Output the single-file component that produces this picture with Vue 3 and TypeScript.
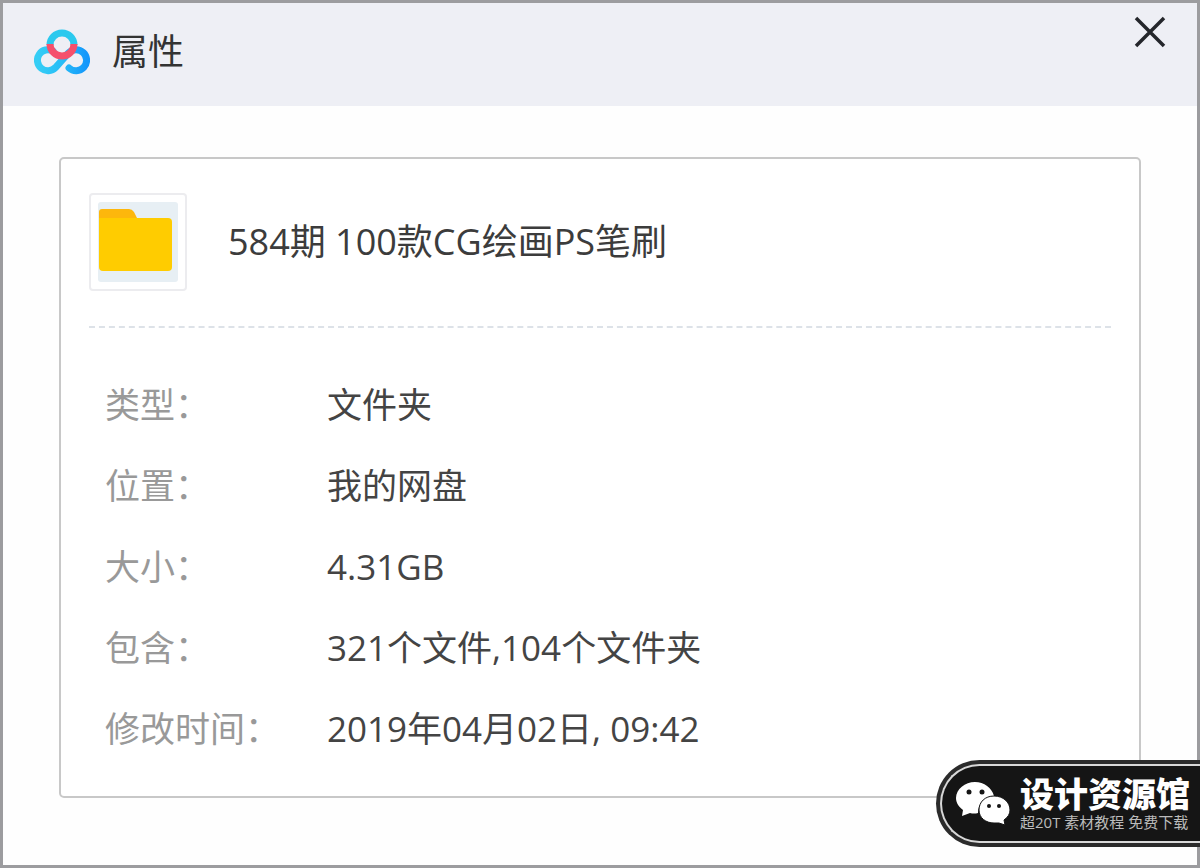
<script setup lang="ts">
interface Property {
  label: string
  value: string
}

const properties: Property[] = [
  { label: '类型：', value: '文件夹' },
  { label: '位置：', value: '我的网盘' },
  { label: '大小：', value: '4.31GB' },
  { label: '包含：', value: '321个文件,104个文件夹' },
  { label: '修改时间：', value: '2019年04月02日, 09:42' },
]
</script>

<template>
  <main class="window">
    <header class="titlebar">
      <svg class="logo" viewBox="0 0 56 48" aria-hidden="true">
        <defs>
          <linearGradient id="loopBlue" x1="0" y1="0" x2="1" y2="0">
            <stop offset="0" stop-color="#35cdf5" />
            <stop offset="0.5" stop-color="#27bdf7" />
            <stop offset="1" stop-color="#1497fb" />
          </linearGradient>
        </defs>
        <g fill="none" stroke-width="7" stroke-linecap="round">
          <path
            d="M19 23 A10.500 10.500 0 1 0 21.500 39.500 L34.500 25 A10.500 10.500 0 1 1 35 40"
            stroke="url(#loopBlue)"
          />
          <path d="M16 17 A12 12 0 0 1 40 17" stroke="#2bc9ee" stroke-linecap="butt" />
          <path d="M16 16 A12 12 0 0 0 40 16" stroke="#f5506c" stroke-linecap="butt" />
        </g>
      </svg>
      <h1 class="title">属性</h1>
      <button class="close" type="button" aria-label="关闭">
        <svg viewBox="0 0 32 32" aria-hidden="true">
          <path d="M2 2 L30 30 M30 2 L2 30" fill="none" stroke="#24262b" stroke-width="3.500" />
        </svg>
      </button>
    </header>

    <section class="card">
      <div class="summary">
        <div class="thumb">
          <svg viewBox="0 0 80 80" aria-hidden="true">
            <rect width="80" height="80" rx="3" fill="#e7eff4" />
            <path d="M1 20 V10 Q1 7 4 7 H31 Q34 7 36 10 L41 20 Z" fill="#fdb70c" />
            <path d="M1 16 H70 Q74 16 74 20 V65 Q74 69 70 69 H5 Q1 69 1 65 Z" fill="#fc0" />
          </svg>
        </div>
        <h2 class="name">584期 100款CG绘画PS笔刷</h2>
      </div>

      <dl class="properties">
        <div v-for="item in properties" :key="item.label" class="row">
          <dt>{{ item.label }}</dt>
          <dd>{{ item.value }}</dd>
        </div>
      </dl>
    </section>

    <aside class="badge">
      <div class="badge-inner">
        <svg class="chat" viewBox="0 0 54 44" aria-hidden="true">
          <path
            d="M19 0 C9 0 0 7 0 16 C0 21 3 25 7 28 L6 34 L14 31 Q18 32 22 31 C22 21 29 15 38 14 C36 6 28 0 19 0 Z"
            fill="#fff"
          />
          <path
            d="M38 14 C29 14 23 20 23 28 C23 36 30 41 38 41 L43 41 L49 43 L48 38 C52 35 54 32 54 28 C54 20 47 14 38 14 Z"
            fill="#fff"
            stroke="#151515"
            stroke-width="1"
          />
          <g fill="#151515">
            <circle cx="13" cy="10" r="2.500" />
            <circle cx="26" cy="10" r="2.500" />
            <circle cx="33" cy="24" r="2" />
            <circle cx="43" cy="24" r="2" />
          </g>
        </svg>
        <div class="badge-text">
          <strong>设计资源馆</strong>
          <small>超20T 素材教程 免费下载</small>
        </div>
      </div>
    </aside>
  </main>
</template>

<style>
body {
  margin: 0;
}
</style>

<style scoped>
.window {
  position: relative;
  box-sizing: border-box;
  min-height: 100vh;
  padding-bottom: 64px;
  border: 3px solid #9c9c9f;
  background: #fefefe;
  color: #444;
  font-family: "Open Sans", "Noto Sans CJK SC", sans-serif;
  font-size: 35px;
  line-height: 48px;
}

.titlebar {
  display: flex;
  align-items: center;
  box-sizing: border-box;
  height: 103px;
  padding: 0 31px 6px;
  background: #eeeff5;
}

.logo {
  width: 56px;
  height: 48px;
}

.title,
.name {
  margin: 0;
  font-size: 36px;
  font-weight: 400;
}

.title {
  flex: 1;
  margin-left: 22px;
  color: #333;
}

.close {
  align-self: flex-start;
  width: 32px;
  height: 32px;
  margin-top: 13px;
  padding: 0;
  border: 0;
  background: none;
}

.close svg {
  display: block;
  width: 32px;
  height: 32px;
}

.card {
  margin: 51px 56px 0;
  padding: 34px 28px 43px;
  border: 2px solid #c8c8c8;
  border-radius: 5px;
  background: #fff;
}

.summary {
  display: flex;
  align-items: center;
  gap: 41px;
  padding-bottom: 35px;
  border-bottom: 2px dashed #dde2e8;
}

.thumb {
  padding: 7px;
  border: 2px solid #ececef;
  border-radius: 4px;
}

.thumb svg {
  display: block;
  width: 80px;
  height: 80px;
}

.name {
  color: #3c3c3c;
}

.properties {
  display: grid;
  gap: 33px;
  margin: 53px 0 0;
  padding-left: 16px;
}

.row {
  display: grid;
  grid-template-columns: 222px 1fr;
}

dt {
  color: #999;
}

dd {
  margin: 0;
}

.badge {
  position: absolute;
  right: -3px;
  bottom: 18px;
  padding: 4px 0 4px 4px;
  border-radius: 44px 0 0 44px;
  background: #2b2b2b;
}

.badge-inner {
  display: flex;
  align-items: center;
  gap: 10px;
  box-sizing: border-box;
  height: 79px;
  padding: 0 10px 0 14px;
  border: solid #d8d8d8;
  border-width: 2px 0 2px 2px;
  border-radius: 40px 0 0 40px;
  background: #151515;
  color: #fff;
}

.chat {
  width: 54px;
  height: 44px;
}

.badge-text {
  display: grid;
  white-space: nowrap;
}

.badge-text strong {
  font-size: 34px;
  font-weight: 900;
  line-height: 36px;
}

.badge-text small {
  color: #bbb;
  font-size: 15px;
  line-height: 20px;
}
</style>
